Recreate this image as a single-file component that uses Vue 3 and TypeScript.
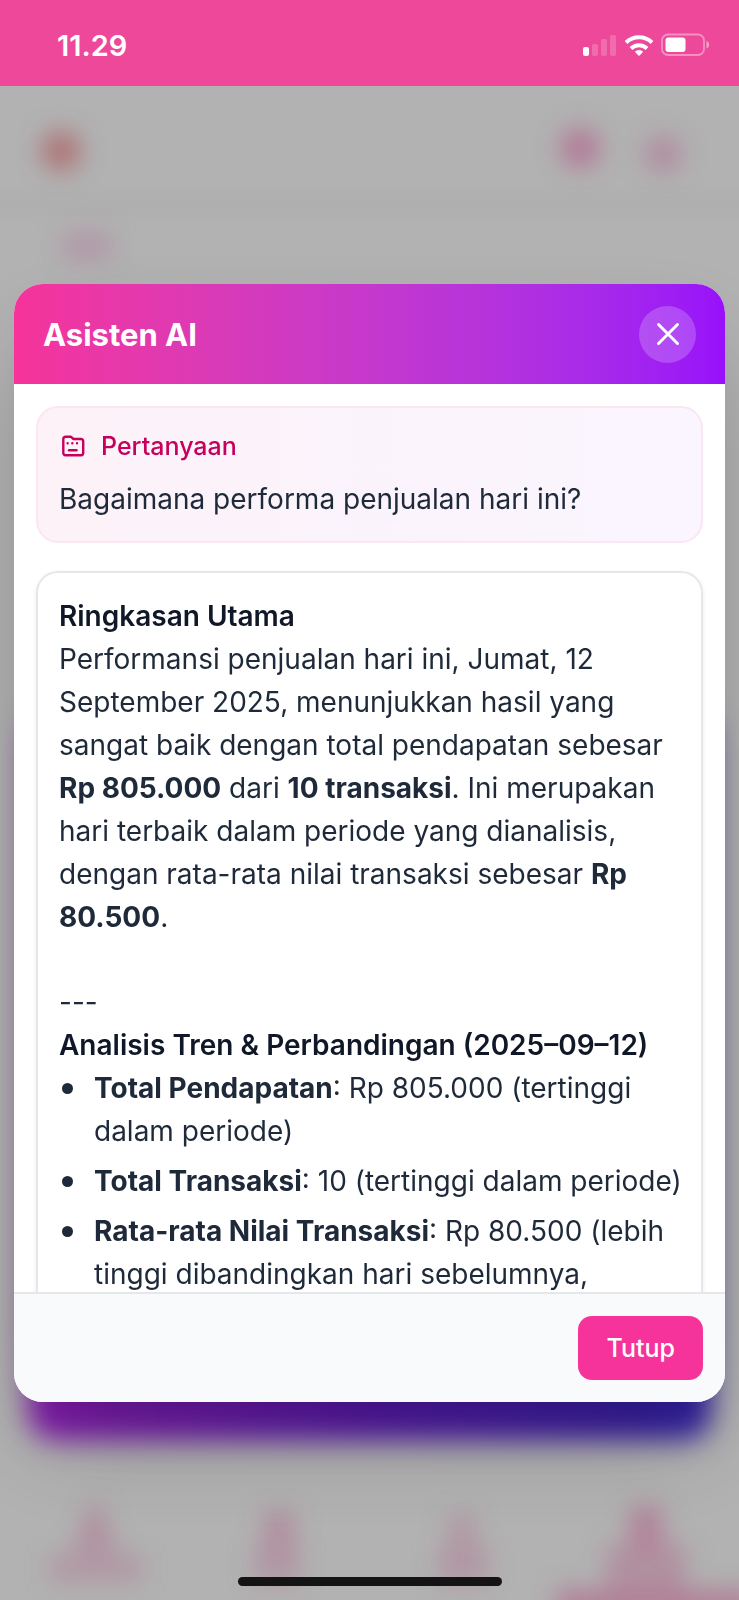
<script setup lang="ts">
interface Segment {
  text: string
  strong?: boolean
}

const question = 'Bagaimana performa penjualan hari ini?'

const summary: Segment[] = [
  { text: 'Performansi penjualan hari ini, Jumat, 12 September 2025, menunjukkan hasil yang sangat baik dengan total pendapatan sebesar ' },
  { text: 'Rp 805.000', strong: true },
  { text: ' dari ' },
  { text: '10 transaksi', strong: true },
  { text: '. Ini merupakan hari terbaik dalam periode yang dianalisis, dengan rata-rata nilai transaksi sebesar ' },
  { text: 'Rp 80.500', strong: true },
  { text: '.' },
]

const trends = [
  { label: 'Total Pendapatan', value: 'Rp 805.000 (tertinggi dalam periode)' },
  { label: 'Total Transaksi', value: '10 (tertinggi dalam periode)' },
  { label: 'Rata-rata Nilai Transaksi', value: 'Rp 80.500 (lebih tinggi dibandingkan hari sebelumnya,' },
]
</script>

<template>
  <div class="screen">
    <header class="status">
      <time class="clock">11.29</time>
      <svg class="status-icons" viewBox="0 0 128 24" aria-hidden="true">
        <g fill="#fff">
          <rect x="1" y="14" width="6" height="9" rx="2" />
          <rect x="10" y="11" width="6" height="12" rx="2" opacity=".2" />
          <rect x="19" y="6" width="6" height="17" rx="2" opacity=".2" />
          <rect x="28" y="2" width="6" height="21" rx="2" opacity=".2" />
          <path d="M57 23l-4.200-4.300a6.200 6.200 0 0 1 8.400 0z" />
        </g>
        <g fill="none" stroke="#fff" stroke-width="4">
          <path d="M49 15.500a11.500 11.500 0 0 1 16 0" />
          <path d="M44 9.500a19 19 0 0 1 26 0" />
        </g>
        <rect x="80" y="1.500" width="42" height="20.500" rx="6" fill="none" stroke="#fff" stroke-width="1.800" opacity=".4" />
        <rect x="83.500" y="4.500" width="20" height="14.500" rx="3" fill="#fff" />
        <path d="M124.500 8c3.500 1.500 3.500 6 0 7.500z" fill="#fff" opacity=".5" />
      </svg>
    </header>

    <main class="stage">
      <svg class="scenery" viewBox="0 86 739 1514" preserveAspectRatio="none" aria-hidden="true">
        <defs>
          <linearGradient id="promo" x1="0" x2="1" y1="0" y2="0">
            <stop offset="0" stop-color="#861cae" />
            <stop offset=".5" stop-color="#5518a8" />
            <stop offset="1" stop-color="#2f20a0" />
          </linearGradient>
          <filter id="soft" x="-100%" y="-100%" width="300%" height="300%" color-interpolation-filters="sRGB">
            <feGaussianBlur stdDeviation="12" />
          </filter>
          <filter id="edge" x="-20%" y="-20%" width="140%" height="140%" color-interpolation-filters="sRGB">
            <feGaussianBlur stdDeviation="14" />
          </filter>
        </defs>
        <rect x="-40" y="198" width="820" height="12" fill="#a6a6a6" opacity=".5" filter="url(#soft)" />
        <rect x="28" y="712" width="684" height="728" rx="28" fill="url(#promo)" filter="url(#edge)" />
        <g filter="url(#soft)">
          <circle cx="61" cy="151" r="20" fill="#ad5a5e" opacity=".7" />
          <circle cx="580" cy="148" r="20" fill="#b25c88" opacity=".65" />
          <circle cx="663" cy="154" r="19" fill="#b06a8e" opacity=".5" />
          <rect x="62" y="234" width="50" height="24" fill="#b0709a" opacity=".45" />
        </g>
        <g fill="#b0688a" filter="url(#soft)">
          <path d="M95 1496l22 54-44 0z" opacity=".5" />
          <rect x="50" y="1554" width="92" height="28" opacity=".35" />
          <rect x="264" y="1510" width="30" height="38" opacity=".48" />
          <rect x="254" y="1544" width="46" height="40" opacity=".35" />
          <rect x="448" y="1514" width="28" height="32" opacity=".35" />
          <rect x="438" y="1546" width="50" height="38" opacity=".35" />
          <rect x="630" y="1506" width="32" height="42" opacity=".65" />
          <rect x="606" y="1544" width="80" height="46" opacity=".45" />
          <rect x="556" y="1590" width="200" height="30" opacity=".7" />
        </g>
      </svg>

      <section class="dialog" role="dialog" aria-labelledby="dialog-title">
        <div class="dialog-head">
          <h1 id="dialog-title">Asisten AI</h1>
          <button class="close" type="button" aria-label="Tutup dialog">
            <svg viewBox="0 0 24 24" aria-hidden="true"><path d="M2.500 2.500l19 19M21.500 2.500l-19 19" /></svg>
          </button>
        </div>

        <div class="dialog-body">
          <section class="question">
            <h2>
              <svg viewBox="0 0 26 26" aria-hidden="true">
                <path d="M6.500 3.800h5.500l2.500 2.200h7.500a2.200 2.200 0 0 1 2.200 2.200v11.800a2.200 2.200 0 0 1-2.200 2.200H6.500a2.200 2.200 0 0 1-2.200-2.200V6a2.200 2.200 0 0 1 2.200-2.200z" />
                <path d="M8.600 10.200h.01M13.300 10.200h.01M18 10.200h.01" />
                <path d="M10 17.200h7.500" />
              </svg>
              Pertanyaan
            </h2>
            <p>{{ question }}</p>
          </section>

          <article class="answer">
            <h3>Ringkasan Utama</h3>
            <p>
              <template v-for="(part, i) in summary" :key="i"><strong v-if="part.strong">{{ part.text }}</strong><span v-else>{{ part.text }}</span></template>
            </p>
            <p class="divider">---</p>
            <h3>Analisis Tren &amp; Perbandingan (2025–09–12)</h3>
            <ul>
              <li v-for="item in trends" :key="item.label">
                <p><strong>{{ item.label }}</strong><span>: {{ item.value }}</span></p>
              </li>
            </ul>
          </article>
        </div>

        <footer class="dialog-foot">
          <button class="dismiss" type="button">Tutup</button>
        </footer>
      </section>

      <div class="home-bar"></div>
    </main>
  </div>
</template>

<style>
body {
  margin: 0;
}
</style>

<style scoped>
.screen {
  display: flex;
  flex-direction: column;
  height: 100vh;
  font-family: Inter, "Liberation Sans", sans-serif;
  color: #1e2939;
}

.status {
  flex: none;
  box-sizing: border-box;
  height: 86px;
  padding: 4px 29px 0 57px;
  display: flex;
  align-items: center;
  justify-content: space-between;
  background: #ed4899;
  color: #fff;
}

.clock {
  font-size: 29px;
  font-weight: 600;
}

.status-icons {
  width: 128px;
  height: 24px;
}

.stage {
  position: relative;
  flex: 1;
  min-height: 0;
  display: flex;
  align-items: center;
  padding: 0 14px;
  background: #b2b2b2;
  overflow: hidden;
}

.scenery {
  position: absolute;
  inset: 0;
  width: 100%;
  height: 100%;
}

.dialog {
  position: relative;
  flex: 1;
  min-width: 0;
  height: calc(70vh - 2px);
  display: flex;
  flex-direction: column;
  border-radius: 29px;
  overflow: hidden;
  background: #fff;
  box-shadow: 0 48px 96px -24px rgba(0, 0, 0, 0.3);
}

.dialog-head {
  flex: none;
  box-sizing: border-box;
  height: 100px;
  padding: 0 29px;
  display: flex;
  align-items: center;
  justify-content: space-between;
  background: linear-gradient(90deg in oklab, #f6339a, #9810fa);
  color: #fff;
}

h1,
h2,
h3,
p,
ul {
  margin: 0;
}

h1 {
  font-size: 31px;
  font-weight: 700;
}

.close {
  width: 57px;
  height: 57px;
  padding: 0;
  border: 0;
  border-radius: 50%;
  display: grid;
  place-items: center;
  background: rgba(255, 255, 255, 0.2);
}

.close svg {
  width: 24px;
  height: 24px;
  fill: none;
  stroke: #fff;
  stroke-width: 3;
  stroke-linecap: round;
}

.dialog-body {
  flex: 1;
  min-height: 0;
  padding: 22px;
  overflow-y: auto;
  scrollbar-width: none;
}

.question {
  padding: 19px 21px 20px;
  border: 2px solid #fbe6f2;
  border-radius: 22px;
  background: linear-gradient(90deg in oklab, #fdf2f8, #faf5ff);
}

h2 {
  display: flex;
  align-items: center;
  gap: 16px;
  margin-bottom: 13px;
  font-size: 25px;
  line-height: 38px;
  font-weight: 500;
  color: #c6005c;
}

h2 svg {
  width: 26px;
  height: 26px;
  fill: none;
  stroke: currentColor;
  stroke-width: 2.4;
  stroke-linecap: round;
  stroke-linejoin: round;
}

.question p,
.answer {
  font-size: 28px;
  line-height: 43px;
  font-weight: 400;
}

.answer {
  margin-top: 28px;
  padding: 22px 12px 22px 21px;
  border: 2px solid #e5e7eb;
  border-radius: 22px;
  box-shadow: 0 2px 5px rgba(0, 0, 0, 0.08);
}

h3 {
  font-size: 28px;
  line-height: 43px;
  font-weight: 600;
  color: #101828;
}

strong {
  font-weight: 700;
}

.divider {
  margin-top: 42px;
}

ul {
  padding: 0;
  list-style: none;
}

li {
  display: grid;
  grid-template-columns: 11px 1fr;
  column-gap: 21px;
  padding-left: 3px;
}

li::before {
  content: "";
  height: 11px;
  margin-top: 16px;
  border-radius: 50%;
  background: currentColor;
}

li + li {
  margin-top: 7px;
}

.dialog-foot {
  flex: none;
  padding: 22px;
  display: flex;
  justify-content: flex-end;
  border-top: 2px solid #e5e7eb;
  background: #f9fafb;
}

.dismiss {
  height: 64px;
  padding: 0 28px;
  border: 0;
  border-radius: 14px;
  background: #f6339a;
  color: #fff;
  font-family: inherit;
  font-size: 25px;
  font-weight: 500;
}

.home-bar {
  position: absolute;
  left: 50%;
  bottom: 14px;
  width: 264px;
  height: 9px;
  margin-left: -132px;
  border-radius: 5px;
  background: #141414;
}
</style>
